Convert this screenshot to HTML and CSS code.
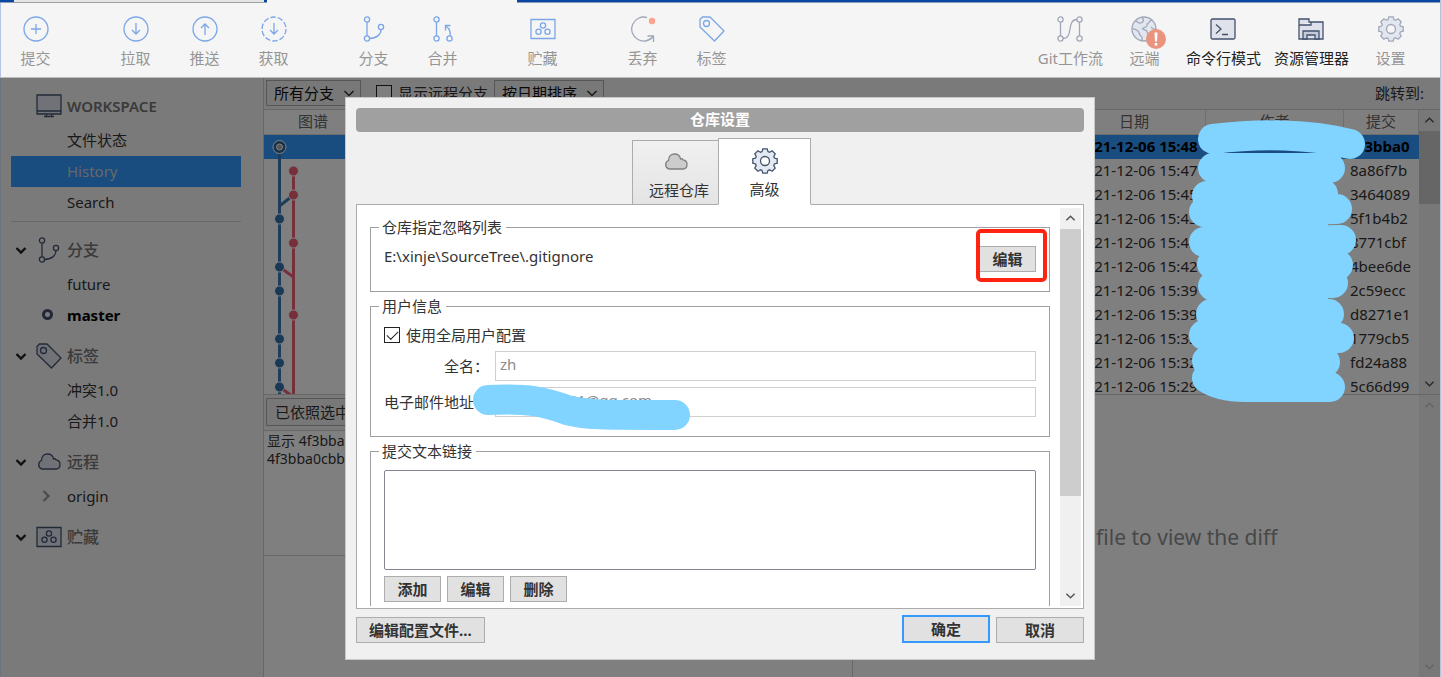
FILE: index.html
```html
<!DOCTYPE html>
<html lang="zh-CN">
<head>
    <meta charset="UTF-8">
    <meta name="viewport" content="width=device-width, initial-scale=1.0">
    <title>仓库设置</title>
    <link rel="stylesheet" href="styles.css">
</head>
<body>
    <!-- Shared icons -->
    <svg class="sprite" aria-hidden="true">
        <symbol id="i-branch" viewBox="0 0 26 26"><circle cx="6" cy="3.5" r="2.6"/><circle cx="6" cy="22.5" r="2.6"/><circle cx="20" cy="11" r="2.6"/><path d="M6 6v14M8.500 22.500c7 0 11.500-4 11.500-9"/></symbol>
        <symbol id="i-stash" viewBox="0 0 26 26"><path class="tint" d="M1 3.500h24v19H1z"/><circle cx="13" cy="9.500" r="2.600"/><circle cx="8.500" cy="15.800" r="2.600"/><circle cx="17.500" cy="15.800" r="2.600"/></symbol>
        <symbol id="i-tag" viewBox="0 0 26 26"><path class="tint" d="M1 3.500L3.500 1h7.500L25 15 15.500 25 1 11z"/><circle cx="7.500" cy="7.500" r="3"/></symbol>
        <symbol id="i-cloud" viewBox="0 0 26 26"><path class="tint" d="M6 20a4.500 4.500 0 0 1-.5-8.500C5.500 7 8.500 5 11.500 5c3.500 0 5.500 2 6 5 1-.5 2-.2 2.500.8 2.500.3 4 2 4 4.500 0 3-1.500 4.700-4 4.700z"/></symbol>
        <symbol id="i-gear" viewBox="0 0 26 26"><path class="tint" d="M10 3.600L10.800.8H15.200L16 3.600 17.500 4.200 20.100 2.800 23.200 5.900 21.800 8.500 22.400 10 25.200 10.800V15.200L22.400 16 21.800 17.500 23.200 20.100 20.100 23.200 17.500 21.800 16 22.400 15.200 25.200H10.800L10 22.400 8.500 21.800 5.900 23.200 2.800 20.100 4.200 17.500 3.600 16 .8 15.200V10.800L3.600 10 4.200 8.500 2.800 5.900 5.900 2.800 8.500 4.200z"/><circle class="hole" cx="13" cy="13" r="4.500"/></symbol>
        <symbol id="i-down" viewBox="0 0 12 12"><path d="M1.500 4L6 8.500 10.500 4"/></symbol>
        <symbol id="i-up" viewBox="0 0 12 12"><path d="M1.500 8L6 3.500 10.500 8"/></symbol>
    </svg>

    <div class="app">
        <div class="titlebar">
            <div class="tab-old"></div>
            <div class="tab-current"></div>
        </div>

        <header class="toolbar">
            <div class="group">
                <button class="tool blue" disabled><svg class="icon" viewBox="0 0 26 26"><circle cx="13" cy="13" r="12"/><path d="M13 8v10M8 13h10"/></svg>提交</button>
            </div>
            <div class="group">
                <button class="tool blue" disabled><svg class="icon" viewBox="0 0 26 26"><circle cx="13" cy="13" r="12"/><path d="M13 7v11M9 14l4 4 4-4"/></svg>拉取</button>
                <button class="tool blue" disabled><svg class="icon" viewBox="0 0 26 26"><circle cx="13" cy="13" r="12"/><path d="M13 19V8M9 12l4-4 4 4"/></svg>推送</button>
                <button class="tool blue" disabled><svg class="icon" viewBox="0 0 26 26"><circle cx="13" cy="13" r="12" stroke-dasharray="5.500 2"/><path d="M13 7v11M9 14l4 4 4-4"/></svg>获取</button>
            </div>
            <div class="group">
                <button class="tool blue" disabled><svg class="icon"><use href="#i-branch"/></svg>分支</button>
                <button class="tool blue" disabled><svg class="icon" viewBox="0 0 26 26"><circle cx="6.500" cy="3.500" r="2.600"/><circle cx="6.500" cy="22.500" r="2.600"/><circle cx="19.500" cy="22.500" r="2.600"/><path d="M6.500 6v14M20 20c1-5-1-8-4.500-10M20.500 9.500h-5v5"/></svg>合并</button>
            </div>
            <div class="group">
                <button class="tool blue" disabled><svg class="icon"><use href="#i-stash"/></svg>贮藏</button>
            </div>
            <div class="group">
                <button class="tool gray" disabled><svg class="icon" viewBox="0 0 26 26"><path d="M17 1.500A12 12 0 1 0 23.500 20M17.500 20H23.500v6"/><circle cx="22" cy="5" r="3.200" fill="#ffa28f" stroke="none"/></svg>丢弃</button>
                <button class="tool blue" disabled><svg class="icon"><use href="#i-tag"/></svg>标签</button>
            </div>
            <div class="group right">
                <button class="tool gray" disabled><svg class="icon" viewBox="0 0 26 26"><circle cx="3.500" cy="3.500" r="2.600"/><circle cx="3.500" cy="22.500" r="2.600"/><circle cx="22.500" cy="3.500" r="2.600"/><circle cx="22.500" cy="22.500" r="2.600"/><path d="M3.500 6v14M22.500 6v14M6 22.500c11 0 3-19 14-19"/></svg>Git工作流</button>
                <button class="tool gray" disabled>
                    <span class="badge-wrap">
                        <svg class="icon" viewBox="0 0 26 26"><circle class="tint" cx="13" cy="13" r="12"/><path d="M4 5c3 0 3 3 6 2s3-4 1-6M1 13c3-1 4 1 6 2s0 3 3 5c2 1 1 3 1 5M11 13c3-3 6-1 5-5 3-1 1-3 5-4M11 13c2 1 5 0 5 3s4 1 4 5M20 11c2 3 3 2 5 2"/></svg>
                        <svg class="badge" viewBox="0 0 20 20"><circle cx="10" cy="10" r="10"/><path d="M8.500 3.500h3l-.5 9h-2zM8.700 14h2.600v2.600H8.700z"/></svg>
                    </span>远端</button>
                <button class="tool dark"><svg class="icon" viewBox="0 0 26 26"><rect class="tint" x="1" y="3" width="24" height="20" rx="1.500"/><path d="M6 8.500l5 4.500-5 4.500M12 18.500h6"/></svg>命令行模式</button>
                <button class="tool dark"><svg class="icon" viewBox="0 0 26 26"><path class="tint" d="M1 23V3h10v3h14v17zM1 9h12V6"/><path class="hole" d="M5 23v-8h16v8h-4v-4H9v4z"/></svg>资源管理器</button>
                <button class="tool gray" disabled><svg class="icon"><use href="#i-gear"/></svg>设置</button>
            </div>
        </header>

        <main class="main">
            <nav class="sidebar">
                <section class="section">
                    <h2 class="section-title"><span class="chevron"></span><svg class="icon" viewBox="0 0 26 26"><path class="tint" d="M1 2h24v19H1zM1 18h24M10.500 21v2.500M15.500 21v2.500M8 23.500h10"/></svg><b>WORKSPACE</b></h2>
                    <a class="item" href="#">文件状态</a>
                    <a class="item selected" href="#">History</a>
                    <a class="item" href="#">Search</a>
                </section>
                <section class="section">
                    <h2 class="section-title"><svg class="chevron"><use href="#i-down"/></svg><svg class="icon"><use href="#i-branch"/></svg>分支</h2>
                    <a class="item" href="#">future</a>
                    <a class="item current" href="#"><i class="ring"></i>master</a>
                </section>
                <section class="section">
                    <h2 class="section-title"><svg class="chevron"><use href="#i-down"/></svg><svg class="icon"><use href="#i-tag"/></svg>标签</h2>
                    <a class="item" href="#">冲突1.0</a>
                    <a class="item" href="#">合并1.0</a>
                </section>
                <section class="section">
                    <h2 class="section-title"><svg class="chevron"><use href="#i-down"/></svg><svg class="icon"><use href="#i-cloud"/></svg>远程</h2>
                    <a class="item" href="#"><svg class="expand" viewBox="0 0 12 12"><path d="M3.500 1L8.500 6l-5 5"/></svg>origin</a>
                </section>
                <section class="section">
                    <h2 class="section-title"><svg class="chevron"><use href="#i-down"/></svg><svg class="icon"><use href="#i-stash"/></svg>贮藏</h2>
                </section>
            </nav>

            <div class="content">
                <div class="filters">
                    <span class="select"><select aria-label="分支"><option>所有分支</option></select><svg><use href="#i-down"/></svg></span>
                    <label class="check"><input type="checkbox">显示远程分支</label>
                    <span class="select"><select aria-label="排序"><option>按日期排序</option></select><svg><use href="#i-down"/></svg></span>
                    <span class="jump">跳转到:</span>
                </div>

                <div class="history">
                    <div class="commits">
                        <table>
                            <thead>
                                <tr><th class="col-graph">图谱</th><th></th><th class="col-date">日期</th><th class="col-author">作者</th><th class="col-hash">提交</th></tr>
                            </thead>
                            <tbody>
                                <tr class="selected"><td></td><td></td><td>2021-12-06 15:48</td><td></td><td>4f3bba0</td></tr>
                                <tr><td></td><td></td><td>2021-12-06 15:47</td><td></td><td>8a86f7b</td></tr>
                                <tr><td></td><td></td><td>2021-12-06 15:45</td><td></td><td>3464089</td></tr>
                                <tr><td></td><td></td><td>2021-12-06 15:43</td><td></td><td>5f1b4b2</td></tr>
                                <tr><td></td><td></td><td>2021-12-06 15:43</td><td></td><td>8771cbf</td></tr>
                                <tr><td></td><td></td><td>2021-12-06 15:42</td><td></td><td>4bee6de</td></tr>
                                <tr><td></td><td></td><td>2021-12-06 15:39</td><td></td><td>2c59ecc</td></tr>
                                <tr><td></td><td></td><td>2021-12-06 15:39</td><td></td><td>d8271e1</td></tr>
                                <tr><td></td><td></td><td>2021-12-06 15:33</td><td></td><td>1779cb5</td></tr>
                                <tr><td></td><td></td><td>2021-12-06 15:32</td><td></td><td>fd24a88</td></tr>
                                <tr><td></td><td></td><td>2021-12-06 15:29</td><td></td><td>5c66d99</td></tr>
                            </tbody>
                        </table>
                        <!-- Commit graph: one row every 24px -->
                        <svg class="graph" viewBox="0 0 80 264">
                            <path class="b" d="M15.500 12v252M15.500 71l14-11"/>
                            <path class="r" d="M29.500 36v228M15.500 132l14 10M15.500 252l14 10"/>
                            <g class="b"><circle cx="15.500" cy="84" r="5"/><circle cx="15.500" cy="132" r="5"/><circle cx="15.500" cy="156" r="5"/><circle cx="15.500" cy="204" r="5"/><circle cx="15.500" cy="228" r="5"/><circle cx="15.500" cy="252" r="5"/></g>
                            <g class="r"><circle cx="29.500" cy="36" r="5"/><circle cx="29.500" cy="60" r="5"/><circle cx="29.500" cy="108" r="5"/><circle cx="29.500" cy="180" r="5"/></g>
                            <circle class="head" cx="15.500" cy="12" r="6.500"/><circle class="head-core" cx="15.500" cy="12" r="3"/>
                        </svg>
                    </div>
                    <div class="scrollbar">
                        <svg><use href="#i-up"/></svg><div class="thumb"></div><svg><use href="#i-down"/></svg>
                    </div>
                </div>

                <div class="details">
                    <div class="detail-left">
                        <div class="detail-bar"><button class="picker">已依照选中</button></div>
                        <div class="message">显示 4f3bba<br>4f3bba0cbb</div>
                        <div class="files"></div>
                    </div>
                    <div class="diff">
                        <p>Select a file to view the diff</p>
                        <div class="scrollbar off">
                            <svg><use href="#i-up"/></svg><svg><use href="#i-down"/></svg>
                        </div>
                    </div>
                </div>
            </div>

            <div class="backdrop">
                <form class="dialog" role="dialog" aria-labelledby="dialogTitle">
                    <h1 class="dialog-title" id="dialogTitle">仓库设置</h1>
                    <div class="tabs">
                        <button type="button" class="tab remote"><svg class="icon"><use href="#i-cloud"/></svg>远程仓库</button>
                        <button type="button" class="tab active"><svg class="icon"><use href="#i-gear"/></svg>高级</button>
                    </div>
                    <div class="panel">
                        <div class="panel-body">
                            <fieldset>
                                <legend>仓库指定忽略列表</legend>
                                <div class="ignore-row">
                                    <span>E:\xinje\SourceTree\.gitignore</span>
                                    <span class="highlight"><button type="button" class="btn">编辑</button></span>
                                </div>
                            </fieldset>
                            <fieldset>
                                <legend>用户信息</legend>
                                <label class="check"><input type="checkbox" checked>使用全局用户配置</label>
                                <div class="fields">
                                    <label for="fullName">全名：</label><input type="text" id="fullName" value="zh" disabled>
                                    <label for="email">电子邮件地址：</label><input type="text" id="email" value="1234567801@qq.com" disabled>
                                </div>
                            </fieldset>
                            <fieldset class="links">
                                <legend>提交文本链接</legend>
                                <textarea aria-label="提交文本链接"></textarea>
                                <div class="buttons">
                                    <button type="button" class="btn">添加</button>
                                    <button type="button" class="btn">编辑</button>
                                    <button type="button" class="btn">删除</button>
                                </div>
                            </fieldset>
                        </div>
                        <div class="scrollbar light">
                            <svg><use href="#i-up"/></svg><div class="thumb"></div><svg><use href="#i-down"/></svg>
                        </div>
                    </div>
                    <div class="dialog-footer">
                        <button type="button" class="btn">编辑配置文件...</button>
                        <button type="button" class="btn wide primary">确定</button>
                        <button type="button" class="btn wide">取消</button>
                    </div>
                    <svg class="mark mark-email" viewBox="473 384 218 47"><path d="M488 400C530 398 545 402 567 410C585 415 600 415 675 415"/></svg>
                </form>
            </div>

            <svg class="mark mark-author" viewBox="1180 115 190 295">
                <path d="M1213 139C1260 133 1310 134 1350 144M1213 168L1330 168M1207 196L1323 194M1204 212L1337 209M1204 242L1341 240M1212 264L1338 265M1213 286L1333 283M1211 314L1329 314M1204 335L1339 338M1207 361L1325 362M1207 378Q1220 387 1245 387H1330"/>
                <rect x="1210" y="170" width="118" height="215"/>
            </svg>
        </main>
    </div>
</body>
</html>
```

FILE: styles.css
```css
:root {
    --blue: #3399ff;
    --title-blue: #0a47a4;
    --line: #cfcfcf;
    --mark: #80d4ff;
    --ink: #333;
}
* {
    box-sizing: border-box;
    margin: 0;
    padding: 0;
}
body {
    font-family: "Noto Sans", "Noto Sans CJK SC", sans-serif;
    font-size: 15px;
    line-height: 20px;
    color: var(--ink);
    overflow: hidden;
}
button, input, select, textarea {
    font: inherit;
    color: inherit;
}
a {
    color: inherit;
    text-decoration: none;
}
svg {
    fill: none;
    stroke: currentColor;
    stroke-width: 1.3;
    display: block;
    flex: none;
}
.sprite {
    position: absolute;
    width: 0;
    height: 0;
}
.icon {
    width: 26px;
    height: 26px;
}
.tint {
    fill: var(--tint, none);
}
.hole {
    fill: var(--hole, none);
}
.app {
    display: flex;
    flex-direction: column;
    height: 100vh;
    border-right: 1px solid #b4c4dc;
}

/* Window title strip */
.titlebar {
    display: flex;
    gap: 3px;
    height: 3px;
    padding-left: 14px;
    background: linear-gradient(var(--title-blue) 2px, #8c9cb4 2px);
}
.titlebar div {
    width: 250px;
}
.tab-old {
    background: #e4e4e4;
    border-bottom: 1px solid #a0a0a0;
}
.tab-current {
    background: #f5f5f5;
}

/* Toolbar */
.toolbar {
    display: flex;
    gap: 31px;
    height: 75px;
    padding: 13px 15px 0 0;
    background: #f5f5f5;
    border-left: 1px solid #b4c4e4;
    border-bottom: 1px solid #bdbdbd;
}
.group {
    display: flex;
}
.group.right {
    margin-left: auto;
    gap: 1px;
}
.tool {
    display: flex;
    flex-direction: column;
    align-items: center;
    gap: 6px;
    min-width: 69px;
    padding: 0 6px;
    background: none;
    border: none;
    color: #959595;
    white-space: nowrap;
}
.tool.blue .icon {
    color: #7ba6e8;
}
.tool.gray .icon {
    color: #a0a8b8;
    --tint: #e2e6ee;
    --hole: #f5f5f5;
}
.tool.dark {
    color: #222;
}
.tool.dark .icon {
    color: #42526e;
    --tint: #dfe2ea;
    --hole: #c4cad8;
}
.badge-wrap {
    position: relative;
}
.badge {
    position: absolute;
    left: 15px;
    top: 13px;
    width: 20px;
    height: 20px;
    fill: #ea937f;
    stroke: none;
}
.badge path {
    fill: #fff;
}

/* Main area */
.main {
    position: relative;
    display: flex;
    flex: 1;
    min-height: 0;
}
.sidebar {
    flex: none;
    width: 264px;
    padding: 9px 22px 0 10px;
    background: #f5f5f5;
    border-left: 1px solid #d8e8ff;
    border-right: 1px solid var(--line);
}
.section {
    margin-bottom: 6px;
}
.section:first-child {
    padding-bottom: 3px;
    margin-bottom: 9px;
    border-bottom: 1px solid var(--line);
}
.section-title {
    display: flex;
    align-items: center;
    height: 38px;
    font-size: 16px;
    font-weight: 500;
    color: #757575;
}
.section-title b {
    font-weight: 600;
    font-size: 15px;
}
.section-title .chevron {
    width: 12px;
    height: 12px;
    margin: 0 9px 0 4px;
    color: #222;
    stroke-width: 2.4;
}
.section-title .icon {
    margin-right: 5px;
    color: #44546f;
    --tint: #e0e4ee;
}
.item {
    position: relative;
    display: block;
    height: 31px;
    padding-left: 56px;
    line-height: 31px;
}
.item.selected {
    background: var(--blue);
    color: #cfcfcf;
}
.item.current {
    font-weight: bold;
    color: #000;
}
.ring {
    position: absolute;
    left: 31px;
    top: 9px;
    width: 11px;
    height: 11px;
    border: 3px solid #42526e;
    border-radius: 50%;
}
.expand {
    position: absolute;
    left: 29px;
    top: 9px;
    width: 12px;
    height: 12px;
    color: #999;
    stroke-width: 2.2;
}
.content {
    display: flex;
    flex: 1;
    flex-direction: column;
    min-width: 0;
    background: #fff;
}
.filters {
    display: flex;
    gap: 6px;
    height: 32px;
    padding: 2px 16px 0 2px;
    background: #f5f5f5;
    border-bottom: 1px solid var(--line);
}
.filters .select {
    position: relative;
}
.filters select {
    height: 26px;
    padding: 0 25px 0 7px;
    appearance: none;
    background: #f0f0f0;
    border: 1px solid #adadad;
    color: #111;
}
.filters .select svg {
    position: absolute;
    right: 6px;
    top: 7px;
    width: 12px;
    height: 12px;
    stroke-width: 1.5;
}
.filters .check {
    height: 26px;
    margin-left: 9px;
}
.jump {
    margin-left: auto;
    padding-top: 3px;
}
.check {
    display: flex;
    align-items: center;
    gap: 6px;
}
.check input {
    display: grid;
    place-content: center;
    width: 16px;
    height: 16px;
    appearance: none;
    background: #fff;
    border: 1px solid #222;
}
.check input:checked::before {
    content: "";
    width: 10px;
    height: 5px;
    border: solid #222;
    border-width: 0 0 1px 1px;
    transform: translateY(-1px) rotate(-45deg);
}

/* Commit list */
.history {
    display: flex;
    height: 285px;
    border-bottom: 1px solid var(--line);
}
.commits {
    position: relative;
    flex: 1;
    min-width: 0;
    overflow: hidden;
}
.commits table {
    width: 100%;
    table-layout: fixed;
    border-collapse: separate;
    border-spacing: 0;
}
.commits th {
    height: 25px;
    padding-bottom: 2px;
    font-weight: normal;
    color: #666;
    border-right: 1px solid #ddd;
    border-bottom: 1px solid #ddd;
}
.commits td {
    height: 24px;
    padding-bottom: 2px;
    overflow: hidden;
    white-space: nowrap;
}
.commits td:nth-child(3) {
    padding-left: 14px;
}
.commits td:nth-child(5) {
    padding-left: 6px;
}
.commits .selected td {
    background: var(--blue);
    color: #000;
    font-weight: bold;
}
.col-graph {
    width: 99px;
}
.col-date {
    width: 143px;
}
.col-author {
    width: 138px;
}
.col-hash {
    width: 75px;
}
.graph {
    position: absolute;
    left: 0;
    top: 25px;
    width: 80px;
    height: 264px;
    stroke-width: 3;
}
.graph .b {
    stroke: #3d7ab4;
}
.graph .r {
    stroke: #ee5f78;
}
.graph circle {
    stroke: #fff;
    stroke-width: 1;
}
.graph .b circle {
    fill: #3572ac;
}
.graph .r circle {
    fill: #ee5f78;
}
.graph .head {
    fill: #2f6496;
}
.graph .head-core {
    fill: #aaa;
}

/* Scroll bars */
.scrollbar {
    display: flex;
    flex: none;
    flex-direction: column;
    justify-content: space-between;
    width: 21px;
    background: #f0f0f0;
    color: #555;
}
.scrollbar svg {
    width: 21px;
    height: 21px;
    padding: 5px;
    stroke-width: 1.6;
}
.scrollbar .thumb {
    height: 73px;
    margin-bottom: auto;
    background: #cdcdcd;
}
.scrollbar.off {
    color: #c8c8c8;
}
.scrollbar.light .thumb {
    height: 267px;
}

/* Details */
.details {
    display: flex;
    flex: 1;
    min-height: 0;
}
.detail-left {
    flex: 1;
    border-right: 1px solid var(--line);
}
.detail-bar {
    height: 36px;
    padding: 3px 2px;
    border-bottom: 1px solid var(--line);
    background: #f5f5f5;
}
.picker {
    height: 28px;
    padding: 0 8px;
    background: #f0f0f0;
    border: 1px solid #adadad;
}
.message {
    height: 125px;
    padding: 1px 3px;
    font-size: 14px;
    line-height: 18px;
    border-bottom: 1px solid var(--line);
}
.diff {
    position: relative;
    display: flex;
    flex: 1;
    align-items: center;
    justify-content: center;
    padding-top: 2px;
    font-size: 21px;
    color: #909090;
}
.diff .scrollbar {
    position: absolute;
    top: 0;
    right: 0;
    bottom: 0;
}

/* Dialog */
.backdrop {
    position: absolute;
    inset: 0;
    display: flex;
    align-items: flex-start;
    justify-content: center;
    padding-top: 19px;
    background: rgba(0, 0, 0, 0.5);
}
.dialog {
    position: relative;
    width: 750px;
    padding: 10px 10px 16px;
    background: #f0f0f0;
    border: 1px solid #c8c8c8;
}
.dialog-title {
    height: 24px;
    margin-bottom: 6px;
    border-radius: 4px;
    background: #a0a0a0;
    color: #fff;
    font-size: 15px;
    line-height: 22px;
    text-align: center;
}
.tabs {
    position: relative;
    display: flex;
    align-items: flex-end;
    justify-content: center;
    margin-bottom: -1px;
    padding-left: 3px;
}
.tab {
    display: flex;
    flex-direction: column;
    align-items: center;
    gap: 5px;
    height: 65px;
    padding: 8px 9px 0 16px;
    background: linear-gradient(#f0f0f0, #e4e4e4);
    border: 1px solid #acacac;
    border-right: none;
}
.tab.active {
    width: 93px;
    height: 67px;
    padding: 9px 0 0;
    background: #fff;
    border-right: 1px solid #acacac;
    border-bottom-color: #fff;
}
.tab .icon {
    color: #42526e;
    --tint: #e4e8f0;
    --hole: #fff;
}
.tab.remote .icon {
    margin-right: 6px;
    color: #808080;
    --tint: #ccc;
}
.panel {
    display: flex;
    gap: 10px;
    padding: 3px 2px 2px 13px;
    background: #fff;
    border: 1px solid #acacac;
}
.panel-body {
    flex: 1;
    height: 398px;
    padding-top: 10px;
    overflow: hidden;
}
fieldset {
    margin-bottom: 5px;
    padding: 9px 13px 19px;
    border: 1px solid #a0a0a0;
}
legend {
    margin-left: -5px;
    padding: 0 4px 0 3px;
    line-height: 19px;
}
.ignore-row {
    display: flex;
    justify-content: space-between;
}
.highlight {
    position: relative;
}
.highlight::after {
    content: "";
    position: absolute;
    inset: -17px -11px -10px -3px;
    border: 4px solid #ff2412;
    border-radius: 5px;
    pointer-events: none;
}
.fields {
    display: grid;
    grid-template-columns: 105px 1fr;
    gap: 6px;
    margin-top: 6px;
    align-items: center;
}
.fields label {
    justify-self: end;
    white-space: nowrap;
}
.fields input {
    height: 30px;
    min-width: 0;
    padding: 0 4px 5px;
    background: #fff;
    border: 1px solid #cfcfcf;
    color: #8a8a8a;
}
.links textarea {
    display: block;
    width: 100%;
    height: 100px;
    resize: none;
    border: 1px solid #828790;
    border-radius: 2px;
}
.buttons {
    display: flex;
    gap: 6px;
    margin-top: 6px;
}
.btn {
    min-width: 57px;
    height: 26px;
    padding: 0 12px;
    background: #e1e1e1;
    border: 1px solid #adadad;
    font-weight: bold;
    line-height: 24px;
    white-space: nowrap;
}
.btn.wide {
    min-width: 88px;
}
.btn.primary {
    height: 28px;
    margin-left: auto;
    border: 2px solid var(--blue);
}
.dialog-footer {
    display: flex;
    align-items: flex-end;
    gap: 6px;
    margin-top: 6px;
}

/* Brush marks */
.mark {
    position: absolute;
    pointer-events: none;
    stroke: var(--mark);
    stroke-width: 30;
    stroke-linecap: round;
}
.mark rect {
    fill: var(--mark);
    stroke: none;
}
.mark-email {
    left: 127px;
    top: 286px;
    width: 218px;
    height: 47px;
}
.mark-author {
    right: 70px;
    top: 37px;
    width: 190px;
    height: 295px;
}
```
